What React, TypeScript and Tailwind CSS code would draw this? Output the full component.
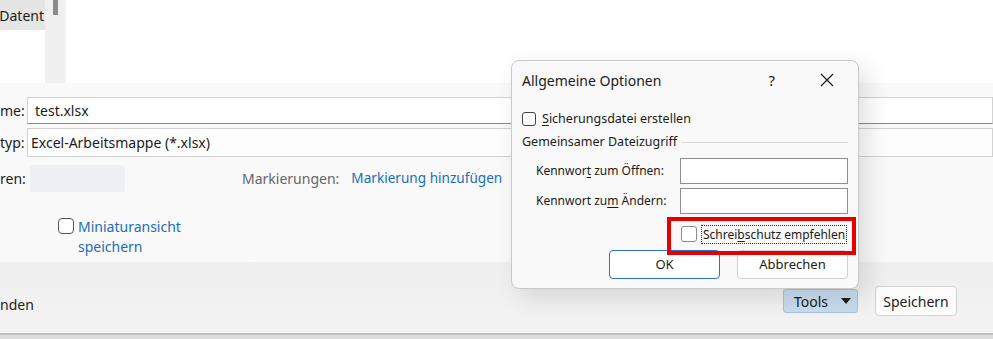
import React from 'react';

const font = "font-['Noto_Sans','Liberation_Sans',sans-serif]";

function Checkbox({ className = '' }: { className?: string }) {
  return <span className={`inline-block shrink-0 rounded-[3px] border bg-white ${className}`} />;
}

function SaveOptionsDialog() {
  return (
    <div className="absolute left-[511px] top-[60px] flex h-[229px] w-[348px] flex-col rounded-[8px] border border-[#c9c9c9] bg-[#f9f9f9] px-[10px] text-[12px] text-[#1b1b1b] shadow-[8px_8px_24px_rgba(0,0,0,0.12)] [&>*]:shrink-0">
      {/* title bar */}
      <div className="flex h-[38px] items-center">
        <span className="text-[14px]">Allgemeine Optionen</span>
        <span className="ml-auto mr-[45px] text-[15px]">?</span>
        <svg width="14" height="14" viewBox="0 0 14 14" className="mr-[14px]">
          <path d="M1 1 L13 13 M13 1 L1 13" stroke="#1b1b1b" strokeWidth="1.2" />
        </svg>
      </div>

      <div className="mt-[11px] flex h-[18px] items-center gap-[6px]">
        <Checkbox className="h-[14px] w-[14px] border-[#444]" />
        <span className="text-[12.5px]">
          <span className="underline underline-offset-2">S</span>icherungsdatei erstellen
        </span>
      </div>

      <div className="mt-[5px] flex h-[18px] items-center gap-[5px]">
        <span className="text-[12.5px]">Gemeinsamer Dateizugriff</span>
        <span className="h-px flex-1 bg-[#d6d6d6]" />
      </div>

      <div className="mt-[7px] flex flex-col gap-[4px]">
        <div className="flex items-center">
          <span className="ml-[14px] w-[145px]">
            Kennwor<span className="underline underline-offset-2">t</span> zum Öffnen:
          </span>
          <div className="h-[26px] w-[169px] border border-[#8e8e8e] bg-white" />
        </div>
        <div className="flex items-center">
          <span className="ml-[14px] w-[145px]">
            Kennwort zu<span className="underline underline-offset-2">m</span> Ändern:
          </span>
          <div className="h-[26px] w-[169px] border border-[#8e8e8e] bg-white" />
        </div>
      </div>

      <div className="mt-[11px] flex h-[18px] items-center whitespace-nowrap pl-[159px]">
        <Checkbox className="h-[16px] w-[16px] border-[#8a8a8a] bg-[#f3f3f3]" />
        <span className="ml-[4px] border border-dotted border-[#333] px-[1px] text-[12px] leading-[17px]">
          Schrei<span className="underline underline-offset-2">b</span>schutz empfehlen
        </span>
      </div>

      <div className="mt-[7px] flex justify-end gap-[17px]">
        <button className="h-[29px] w-[111px] rounded-[4px] border border-[#2d6ec9] bg-white text-[13px]">
          OK
        </button>
        <button className="h-[29px] w-[111px] rounded-[4px] border border-[#d0d0d0] bg-white text-[13px]">
          Abbrechen
        </button>
      </div>

      {/* highlight annotation */}
      <div className="absolute left-[155px] top-[156px] h-[38px] w-[189px] border-[4px] border-[#e60000]" />
    </div>
  );
}

export default function App() {
  return (
    <div className={`relative h-[339px] w-[993px] overflow-hidden bg-[#f9f9f9] text-[14px] text-[#1b1b1b] ${font}`}>
      {/* file list area */}
      <div className="flex h-[83px] bg-white">
        <div className="w-[45px]">
          <div className="flex h-[30px] items-center justify-end overflow-hidden bg-[#e5e5e5] pr-[1px] text-[14px]">
            Datent
          </div>
        </div>
        <div className="w-[20px] bg-[#f0f0f0] pl-[8px]">
          <div className="h-[15px] w-[5px] bg-[#8b8b8b]" />
        </div>
        <div className="w-px bg-[#f3f3f3]" />
      </div>

      {/* form */}
      <div className="h-[179px] pt-[14px]">
        <div className="flex h-[27px] items-center">
          <span className="w-[27px]">me:</span>
          <div className="flex h-[27px] flex-1 items-center border border-[#d2d2d2] border-b-[#8a8a8a] bg-white pl-[7px]">
            test.xlsx
          </div>
        </div>
        <div className="mt-[4px] flex h-[29px] items-center">
          <span className="w-[27px]">typ:</span>
          <div className="flex h-[29px] flex-1 items-center border border-[#d2d2d2] bg-[#fdfdfd] pl-[3px]">
            Excel-Arbeitsmappe (*.xlsx)
          </div>
        </div>
        <div className="mt-[8px] flex h-[27px] items-center">
          <span className="w-[30px]">ren:</span>
          <div className="h-[27px] w-[95px] rounded-[3px] bg-[#eef0f5]" />
          <span className="ml-[117px] text-[#666666]">Markierungen:</span>
          <span className="ml-[12px] text-[13.6px] text-[#1a6dc2]">Markierung hinzufügen</span>
        </div>
        <div className="ml-[58px] mt-[25px] flex items-start gap-[4px]">
          <Checkbox className="mt-[1px] h-[16px] w-[16px] rounded-[4px] border-[#555]" />
          <span className="leading-[20px] text-[#1a6dc2]">
            Miniaturansicht
            <br />
            speichern
          </span>
        </div>
      </div>

      {/* footer */}
      <div className="flex h-[71px] items-start bg-gradient-to-b from-[#efefef] to-[#f3f3f3] pr-[36px] pt-[24px]">
        <span className="mt-[8px]">nden</span>
        <div className="ml-auto mt-[3px] flex h-[24px] w-[75px] items-center rounded-[3px] border border-[#a9c3db] bg-[#c8dcee] pl-[10px]">
          <span>Tools</span>
          <svg width="10" height="6" viewBox="0 0 10 6" className="ml-auto mr-[6px]">
            <path d="M0 0 H10 L5 6 Z" fill="#1b1b1b" />
          </svg>
        </div>
        <button className="ml-[17px] h-[30px] w-[82px] rounded-[4px] border border-[#d3d3d3] bg-[#fdfdfd] text-[14px]">
          Speichern
        </button>
      </div>
      <div className="h-[6px] border-t-2 border-[#bdbdbd] bg-[#dcdcdc]" />

      <SaveOptionsDialog />
    </div>
  );
}
